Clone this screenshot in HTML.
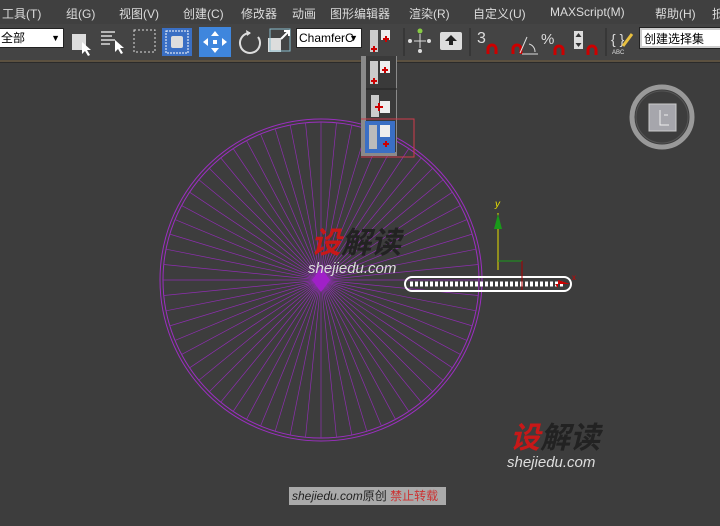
<!DOCTYPE html>
<html><head><meta charset="utf-8"><style>
*{margin:0;padding:0;box-sizing:border-box}
body{width:720px;height:526px;overflow:hidden;background:#3d3d3d;font-family:"Liberation Sans","Noto Sans CJK SC",sans-serif;position:relative}
#menu{position:absolute;left:0;top:0;width:720px;height:24px;background:#404040;color:#dcdcdc;font-size:12px}
#menu span{position:absolute;top:5px}
#tb{position:absolute;left:0;top:24px;width:720px;height:36px;background:#444}
#line{position:absolute;left:0;top:60px;width:720px;height:3px;background:#5c5140;border-bottom:1px solid #2b2b2b}
.dd{position:absolute;background:#fff;border:1px solid #222;color:#000;font-size:12px;height:20px;line-height:18px;padding-left:2px}
.ab{position:absolute}
</style></head><body>
<div id="menu">
<span style="left:2px">工具(T)</span><span style="left:66px">组(G)</span><span style="left:119px">视图(V)</span><span style="left:183px">创建(C)</span><span style="left:241px">修改器</span><span style="left:292px">动画</span><span style="left:330px">图形编辑器</span><span style="left:409px">渲染(R)</span><span style="left:473px">自定义(U)</span><span style="left:550px">MAXScript(M)</span><span style="left:655px">帮助(H)</span><span style="left:712px">抵</span>
</div>
<div id="tb">
<div class="dd" style="left:-2px;top:4px;width:66px">全部<span style="position:absolute;right:3px;top:0;font-size:9px">▼</span></div>
<svg class="ab" style="left:0;top:0" width="720" height="36">
<rect x="72" y="10" width="14" height="16" fill="#ddd"/><path d="M82 18 l0 12 l3 -3 l3 5 l2 -1 l-3 -5 l4 0z" fill="#fff"/>
<g stroke="#ddd" stroke-width="1.5"><line x1="101" y1="8" x2="115" y2="8"/><line x1="101" y1="12" x2="112" y2="12"/><line x1="101" y1="16" x2="115" y2="16"/><line x1="101" y1="20" x2="110" y2="20"/></g>
<path d="M115 16 l0 12 l3 -3 l3 5 l2 -1 l-3 -5 l4 0z" fill="#fff"/>
<rect x="134" y="6" width="21" height="22" fill="none" stroke="#ddd" stroke-dasharray="2,2"/>
<rect x="162" y="4" width="30" height="28" fill="#3a6fc4"/><rect x="166" y="7" width="22" height="22" fill="none" stroke="#fff" stroke-dasharray="2,1"/><rect x="171" y="12" width="12" height="12" fill="#ddd" rx="2"/>
<rect x="199" y="3" width="32" height="30" fill="#3f86dd"/><g fill="#fff"><path d="M215 7 l-4 5 h8z M215 29 l-4 -5 h8z M203 18 l5 -4 v8z M227 18 l-5 -4 v8z"/><rect x="213" y="16" width="4" height="4"/></g>
<path d="M250 9 a10 10 0 1 0 8 4" fill="none" stroke="#ddd" stroke-width="2"/><path d="M246 6 l5 3 l-4 3z" fill="#ddd"/>
<rect x="268" y="14" width="13" height="14" fill="#ddd"/><rect x="270" y="5" width="20" height="22" fill="none" stroke="#8bc" /><path d="M281 15 l8 -8 M284 7 h5 v5" stroke="#fff" stroke-width="2" fill="none"/>
<rect x="370" y="6" width="8" height="22" fill="#ccc"/><rect x="381" y="6" width="9" height="10" fill="#eee"/><path d="M371 25 h6 M374 22 v6 M383 15 h6 M386 12 v6" stroke="#c00" stroke-width="2"/>
<line x1="404" y1="4" x2="404" y2="32" stroke="#2a2a2a"/>
<circle cx="420" cy="7" r="2.5" fill="#8c4"/><g fill="#ddd"><circle cx="410" cy="17" r="2"/><circle cx="429" cy="17" r="2"/><circle cx="420" cy="27" r="2"/></g><path d="M414 17h12M420 10v14" stroke="#ddd"/>
<rect x="440" y="8" width="22" height="18" fill="#ddd" rx="2"/><path d="M451 11 l-6 6 h4 v4 h4 v-4 h4z" fill="#222"/>
<line x1="470" y1="4" x2="470" y2="32" stroke="#2a2a2a"/>
<text x="477" y="19" fill="#ddd" font-size="16">3</text>
<path d="M488 30 v-5 a4 4 0 0 1 8 0 v5" stroke="#c00" stroke-width="3" fill="none"/>
<path d="M513 30 v-5 a4 4 0 0 1 8 0 v5" stroke="#c00" stroke-width="3" fill="none"/><path d="M520 29 l7 -16 M522 30 h16 M529 20 a8 8 0 0 1 6 8" stroke="#ddd" fill="none"/>
<text x="541" y="20" fill="#ddd" font-size="15">%</text><path d="M555 31 v-5 a4 4 0 0 1 8 0 v5" stroke="#c00" stroke-width="3" fill="none"/>
<rect x="574" y="7" width="9" height="18" fill="#ddd"/><path d="M578.5 9 l-3 4 h6z M578.5 23 l-3 -4 h6z" fill="#333"/><path d="M588 31 v-5 a4 4 0 0 1 8 0 v5" stroke="#c00" stroke-width="3" fill="none"/>
<line x1="606" y1="4" x2="606" y2="32" stroke="#2a2a2a"/>
<text x="611" y="20" fill="#ddd" font-size="14">{ }</text><text x="612" y="30" fill="#ddd" font-size="6">ABC</text><path d="M623 22 l9 -12" stroke="#e8c040" stroke-width="3"/>
</svg>
<div class="dd" style="left:296px;top:4px;width:66px">ChamferC<span style="position:absolute;right:3px;top:0;font-size:9px">▼</span></div>
<div class="dd" style="left:640px;top:4px;width:82px;border:2px solid #ccc;outline:1px solid #222">创建选择集</div>
</div>
<div id="line"></div>
<svg class="ab" style="left:0;top:64px" width="720" height="462" viewBox="0 64 720 462">
<g stroke="#9b2fc0" stroke-width="1" fill="none">
<circle cx="321" cy="280" r="161"/><circle cx="321" cy="280" r="158"/>
</g>
<g stroke="#8e2eb0" stroke-width="0.7" fill="none">
<g id="sp">
<line x1="321" y1="280" x2="321" y2="122" transform="rotate(0 321 280)"/><line x1="321" y1="280" x2="321" y2="122" transform="rotate(5.625 321 280)"/><line x1="321" y1="280" x2="321" y2="122" transform="rotate(11.25 321 280)"/><line x1="321" y1="280" x2="321" y2="122" transform="rotate(16.875 321 280)"/><line x1="321" y1="280" x2="321" y2="122" transform="rotate(22.5 321 280)"/><line x1="321" y1="280" x2="321" y2="122" transform="rotate(28.125 321 280)"/><line x1="321" y1="280" x2="321" y2="122" transform="rotate(33.75 321 280)"/><line x1="321" y1="280" x2="321" y2="122" transform="rotate(39.375 321 280)"/><line x1="321" y1="280" x2="321" y2="122" transform="rotate(45 321 280)"/><line x1="321" y1="280" x2="321" y2="122" transform="rotate(50.625 321 280)"/><line x1="321" y1="280" x2="321" y2="122" transform="rotate(56.25 321 280)"/><line x1="321" y1="280" x2="321" y2="122" transform="rotate(61.875 321 280)"/><line x1="321" y1="280" x2="321" y2="122" transform="rotate(67.5 321 280)"/><line x1="321" y1="280" x2="321" y2="122" transform="rotate(73.125 321 280)"/><line x1="321" y1="280" x2="321" y2="122" transform="rotate(78.75 321 280)"/><line x1="321" y1="280" x2="321" y2="122" transform="rotate(84.375 321 280)"/>
</g>
<use href="#sp" transform="rotate(90 321 280)"/><use href="#sp" transform="rotate(180 321 280)"/><use href="#sp" transform="rotate(270 321 280)"/>
</g>
<path d="M312 280 l9 -12 l9 12 l-9 12z" fill="#a020c8"/>
<rect x="405" y="277" width="166" height="14" rx="7" fill="none" stroke="#fff" stroke-width="2"/>
<path d="M410 284 h155" stroke="#fff" stroke-width="5" stroke-dasharray="3,2"/>
<line x1="498" y1="213" x2="498" y2="270" stroke="#e8e000"/>
<path d="M498 214 l-4 15 h8z" fill="#1a9a1a"/>
<line x1="498" y1="261" x2="522" y2="261" stroke="#1a9a1a"/>
<line x1="522" y1="261" x2="522" y2="290" stroke="#a00"/>
<path d="M555 284 l15 0 l-12 -4 v8z" fill="#c00"/>
<text x="495" y="207" fill="#e8e000" font-size="10" font-style="italic">y</text>
<text x="572" y="280" fill="#c00" font-size="8">x</text>
<circle cx="662" cy="117" r="30" fill="none" stroke="#999" stroke-width="5"/>
<circle cx="662" cy="117" r="26" fill="none" stroke="#555" stroke-width="1"/>
<rect x="649" y="104" width="27" height="27" fill="#a6a6ac" stroke="#ccc"/>
<path d="M660 110 v15 h9 M664 115 h4" stroke="#eee" fill="none"/>
</svg>
<div class="ab" style="left:361px;top:56px;width:36px;height:100px;background:#8a8a8a"></div>
<div class="ab" style="left:366px;top:56px;width:30px;height:96px;background:#3a3a3a"></div>
<svg class="ab" style="left:361px;top:56px" width="60" height="104">
<rect x="9" y="5" width="8" height="23" fill="#ccc"/><rect x="19" y="5" width="10" height="12" fill="#eee"/><path d="M10 25h6M13 22v6M21 14h6M24 11v6" stroke="#c00" stroke-width="2"/>
<line x1="5" y1="33" x2="36" y2="33" stroke="#222"/>
<rect x="10" y="39" width="8" height="22" fill="#ccc"/><rect x="19" y="45" width="10" height="12" fill="#eee"/><path d="M14 51h8M18 47v8" stroke="#c00" stroke-width="2"/>
<rect x="4" y="65" width="30" height="32" fill="#3a6fc4"/><rect x="8" y="69" width="8" height="24" fill="#bbb"/><rect x="19" y="69" width="10" height="12" fill="#eee"/><path d="M22 88h6M25 85v6" stroke="#c00" stroke-width="2"/>
<rect x="-1" y="63" width="54" height="38" fill="none" stroke="#d03a4a" stroke-width="1"/>
</svg>
<div class="ab" style="left:311px;top:228px;font-size:30px;font-weight:bold;font-style:italic;line-height:32px"><span style="color:#c81818">设</span><span style="color:#222">解读</span></div>
<div class="ab" style="left:308px;top:260px;font-size:15px;font-style:italic;color:#ddd">shejiedu.com</div>
<div class="ab" style="left:510px;top:423px;font-size:30px;font-weight:bold;font-style:italic;line-height:32px"><span style="color:#c81818">设</span><span style="color:#222">解读</span></div>
<div class="ab" style="left:507px;top:454px;font-size:15px;font-style:italic;color:#ddd">shejiedu.com</div>
<div class="ab" style="left:289px;top:487px;width:157px;height:18px;background:#aaa;font-size:12px;line-height:18px;padding-left:3px;color:#222"><i>shejiedu.com</i>原创 <span style="color:#c33">禁止转载</span></div>
</body></html>
